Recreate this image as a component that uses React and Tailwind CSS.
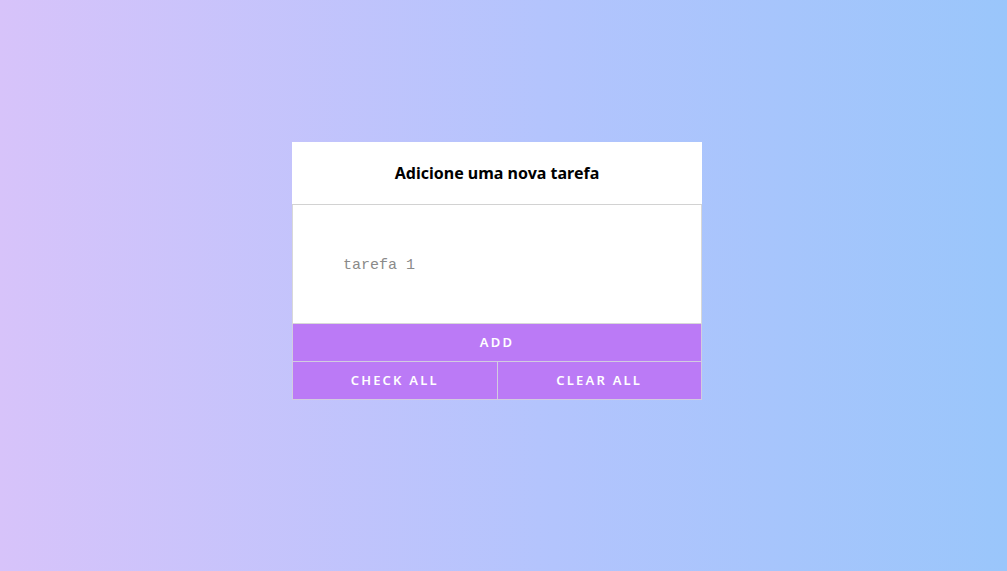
import React, { useState } from "react";

const App = () => {
  const [task, setTask] = useState("");

  return (
    <div className="min-h-[571px] w-full bg-[linear-gradient(to_right,#d7c3fa,#b3c4fd_55%,#9ac6fb)] pt-[142px] font-['Noto_Sans',sans-serif]">
      <div className="ml-[292px] w-[410px]">
        {/* Header */}
        <div className="flex h-[63px] items-center justify-center border-b border-[#d2d2d2] bg-white">
          <h1 className="text-[16px] font-bold text-black">Adicione uma nova tarefa</h1>
        </div>

        {/* Input */}
        <input
          type="text"
          placeholder="tarefa 1"
          value={task}
          onChange={(e) => setTask(e.target.value)}
          className="block h-[119px] w-full border-x border-b border-[#d8d8d8] bg-white pl-[50px] pt-[2px] font-['Liberation_Mono',monospace] text-[15px] text-gray-700 outline-none placeholder:text-[#8a8a8a]"
        />

        {/* Buttons */}
        <button className="block h-[38px] w-full border border-t-0 border-[#d2cbe0] bg-[#bb7af6] text-[13px] font-semibold tracking-[2.2px] text-white">
          ADD
        </button>
        <div className="flex">
          <button className="h-[38px] flex-1 border border-t-0 border-[#d2cbe0] bg-[#bb7af6] text-[13px] font-semibold tracking-[2.2px] text-white">
            CHECK ALL
          </button>
          <button className="h-[38px] flex-1 border border-t-0 border-l-0 border-[#d2cbe0] bg-[#bb7af6] text-[13px] font-semibold tracking-[2.2px] text-white">
            CLEAR ALL
          </button>
        </div>
      </div>
    </div>
  );
};

export default App;
